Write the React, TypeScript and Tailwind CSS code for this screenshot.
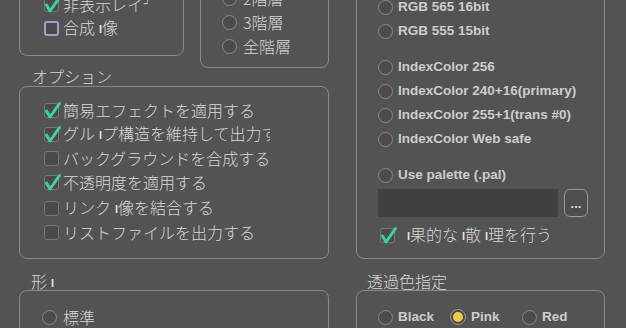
import React from "react";

const jp = "font-['Noto_Sans_CJK_JP','Noto_Sans',sans-serif] font-light text-[16px] text-[#d8d8d8]";
const en = "font-['Liberation_Sans',Arial,sans-serif] text-[13.5px] font-bold text-[#cdcdcd]";

// missing glyph in the original dialog font
const Bar = () => (
  <span className="inline-block w-[7px] text-right font-['Liberation_Sans',sans-serif] text-[11px] font-bold text-[#e0e0e0] align-[1px]">
    I
  </span>
);

const Check = ({ checked, focus }: { checked?: boolean; focus?: boolean }) => (
  <span className="relative inline-block w-[15px] h-[15px] shrink-0">
    <span
      className={`absolute inset-0 rounded-[3px] bg-[#4a4a4a] ${
        focus ? "border-2 border-[#a29fcb]" : "border border-[#777777]"
      }`}
    />
    {checked && (
      <svg className="absolute left-0 top-[-3px]" width="18" height="20" viewBox="0 0 18 20">
        <path
          d="M2.5 11 L6 17 L15.5 3.5"
          stroke="#3fd39b"
          strokeWidth="3"
          fill="none"
          strokeLinecap="round"
          strokeLinejoin="round"
        />
      </svg>
    )}
  </span>
);

const Radio = ({ on }: { on?: boolean }) =>
  on ? (
    <span className="w-[16px] h-[16px] rounded-full border border-[#9a9a9a] bg-[#4c4c4c] p-[2px] shrink-0">
      <span className="block w-full h-full rounded-full bg-[#f2c94c]" />
    </span>
  ) : (
    <span className="w-[15px] h-[15px] rounded-full border border-[#8a8a8a] bg-[#4c4c4c] shrink-0" />
  );

const CheckRow = ({
  checked,
  focus,
  children,
  clip,
  className = "",
}: {
  checked?: boolean;
  focus?: boolean;
  children: React.ReactNode;
  clip?: string;
  className?: string;
}) => (
  <div className={`flex items-center h-[24px] gap-[4px] ${className}`}>
    <Check checked={checked} focus={focus} />
    <span className={`${jp} whitespace-nowrap leading-[24px] ${clip ?? ""}`}>{children}</span>
  </div>
);

const RadioRow = ({
  on,
  children,
  english,
  className = "",
}: {
  on?: boolean;
  children: React.ReactNode;
  english?: boolean;
  className?: string;
}) => (
  <div className={`flex items-center h-[24px] ${english ? "gap-[5px]" : "gap-[6px]"} ${className}`}>
    <Radio on={on} />
    <span className={`${english ? en : jp} whitespace-nowrap leading-[24px]`}>{children}</span>
  </div>
);

const Box = ({ className = "", children }: { className?: string; children?: React.ReactNode }) => (
  <div className={`border border-[#8a8a8a] rounded-[8px] box-border ${className}`}>{children}</div>
);

export default function App() {
  return (
    <div className="w-[626px] h-[328px] overflow-hidden bg-[#535353] select-none">
      {/* upper part, scrolled so its top is out of view */}
      <div className="flex pl-[19px] mt-[-41px]">
        <div className="w-[310px] flex flex-col">
          <div className="flex items-start gap-[16px]">
            <Box className="w-[165px] h-[97px] flex flex-col justify-end pl-[24px] pb-[15px]">
              <CheckRow>レイヤ単位</CheckRow>
              <CheckRow checked clip="w-[85px] overflow-hidden">
                非表示レイヤ
              </CheckRow>
              <CheckRow focus>
                合成<Bar />像
              </CheckRow>
            </Box>
            <Box className="w-[129px] h-[109px] flex flex-col justify-end pl-[21px] pb-[9px]">
              <RadioRow>2階層</RadioRow>
              <RadioRow>3階層</RadioRow>
              <RadioRow>全階層</RadioRow>
            </Box>
          </div>
          <div className={`${jp} h-[18px] leading-[16px] pl-[13px]`}>オプション</div>
          <Box className="h-[173px] flex flex-col pl-[24px] pt-[11px]">
            <CheckRow checked>簡易エフェクトを適用する</CheckRow>
            <CheckRow checked clip="w-[207px] overflow-hidden">
              グル<Bar />プ構造を維持して出力する
            </CheckRow>
            <CheckRow>バックグラウンドを合成する</CheckRow>
            <CheckRow checked>不透明度を適用する</CheckRow>
            <CheckRow className="mt-[2px]">
              リンク<Bar />像を結合する
            </CheckRow>
            <CheckRow>リストファイルを出力する</CheckRow>
          </Box>
        </div>

        <Box className="ml-[27px] w-[249px] h-[300px] flex flex-col justify-end pl-[21px] pb-[11px]">
          <RadioRow english>RGB 888 24bit</RadioRow>
          <RadioRow english>RGB 565 16bit</RadioRow>
          <RadioRow english>RGB 555 15bit</RadioRow>
          <RadioRow english className="mt-[12px]">
            IndexColor 256
          </RadioRow>
          <RadioRow english>IndexColor 240+16(primary)</RadioRow>
          <RadioRow english>IndexColor 255+1(trans #0)</RadioRow>
          <RadioRow english>IndexColor Web safe</RadioRow>
          <RadioRow english className="mt-[12px]">
            Use palette (.pal)
          </RadioRow>
          <div className="flex items-center gap-[6px] mt-[2px]">
            <div className="w-[180px] h-[28px] bg-[#404040]" />
            <button className="w-[24px] h-[28px] rounded-[6px] border border-[#9a9a9a] bg-[#4e4e4e] text-[#dddddd] font-['Liberation_Sans',sans-serif] text-[13px] font-bold leading-[20px] pt-[2px]">
              ...
            </button>
          </div>
          <CheckRow checked className="mt-[6px] ml-[2px] gap-[8px]">
            <Bar />果的な<Bar />散<Bar />理を行う
          </CheckRow>
        </Box>
      </div>

      {/* lower part */}
      <div className="flex pl-[19px] mt-[15px]">
        <div className="w-[310px] flex flex-col">
          <div className={`${jp} h-[16px] leading-[14px] pl-[12px]`}>
            形<Bar />
          </div>
          <Box className="h-[80px] pl-[22px] pt-[14px]">
            <RadioRow>標準</RadioRow>
          </Box>
        </div>
        <div className="ml-[27px] w-[249px] flex flex-col">
          <div className={`${jp} h-[16px] leading-[14px] pl-[11px]`}>透過色指定</div>
          <Box className="h-[80px] pl-[21px] pt-[14px] flex">
            <RadioRow english className="w-[72px]">
              Black
            </RadioRow>
            <RadioRow english on className="w-[72px]">
              Pink
            </RadioRow>
            <RadioRow english className="w-[72px]">
              Red
            </RadioRow>
          </Box>
        </div>
      </div>
    </div>
  );
}
